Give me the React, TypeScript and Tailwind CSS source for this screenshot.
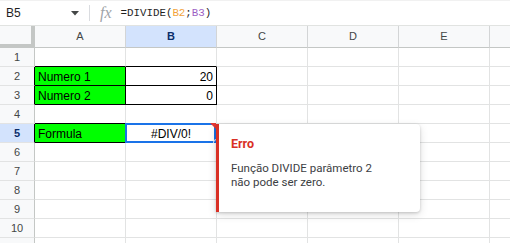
import React from 'react';

const COLS = ['A', 'B', 'C', 'D', 'E', 'F'];
const ROWS = [1, 2, 3, 4, 5, 6, 7, 8, 9, 10, 11];

type CellInfo = { text?: string; green?: boolean; rb?: boolean; bb?: boolean; align?: 'left' | 'right' | 'center' };

const DATA: Record<string, CellInfo> = {
  A1: { bb: true },
  B1: { bb: true },
  A2: { text: 'Numero 1', green: true, rb: true, bb: true },
  B2: { text: '20', rb: true, bb: true, align: 'right' },
  A3: { text: 'Numero 2', green: true, rb: true, bb: true },
  B3: { text: '0', rb: true, bb: true, align: 'right' },
  A4: { bb: true },
  A5: { text: 'Formula', green: true, rb: true, bb: true },
  B5: { text: '#DIV/0!', align: 'center' },
};

function Cell({ col, row }: { col: string; row: number }) {
  const id = `${col}${row}`;
  const info = DATA[id] || {};
  const w = col === 'F' ? 'w-[21px]' : 'w-[91px]';
  const bg = info.green ? 'bg-[#00ff00]' : 'bg-white';
  const rb = info.rb ? 'border-r-black' : 'border-r-[#e2e3e3]';
  const bb = info.bb ? 'border-b-black' : 'border-b-[#e2e3e3]';
  const align =
    info.align === 'right' ? 'justify-end pr-[3px]' : info.align === 'center' ? 'justify-center' : 'justify-start pl-[3px]';
  return (
    <div className={`relative shrink-0 h-full flex items-center border-r border-b ${w} ${bg} ${rb} ${bb} ${align}`}>
      {info.text && <span className="text-[12px] leading-none text-black whitespace-nowrap pt-[1px]">{info.text}</span>}
      {id === 'B5' && (
        <>
          <div className="absolute -left-px -top-px right-0 -bottom-px border-2 border-[#1a73e8] pointer-events-none" />
          <svg className="absolute right-0 -top-px" width="6" height="6" viewBox="0 0 6 6">
            <polygon points="0,0 6,0 6,6" fill="#e53935" />
          </svg>
          <div className="absolute -right-[4px] -bottom-[4px] w-[7px] h-[7px] rounded-full bg-[#1a73e8] border border-white" />
        </>
      )}
    </div>
  );
}

export default function App() {
  return (
    <div
      className="relative w-[510px] h-[243px] overflow-hidden bg-white"
      style={{ fontFamily: '"Liberation Sans", Arial, sans-serif' }}
    >
      {/* formula bar */}
      <div className="h-[26px] flex items-center border-t border-t-[#f1f1f1] border-b border-b-[#e1e3e1] bg-white">
        <div className="w-[89px] flex items-center pl-[6px] pr-[10px] justify-between">
          <span className="text-[12px] text-[#1f1f1f]">B5</span>
          <svg width="8" height="5" viewBox="0 0 8 5">
            <polygon points="0,0 8,0 4,4.5" fill="#444746" />
          </svg>
        </div>
        <div className="w-px h-[16px] bg-[#dadce0]" />
        <span
          className="ml-[10px] text-[16px] italic text-[#a0a4a8] leading-none"
          style={{ fontFamily: '"Liberation Serif", serif' }}
        >
          fx
        </span>
        <span
          className="ml-[9px] text-[10.8px] text-[#1f1f1f] whitespace-nowrap"
          style={{ fontFamily: '"Liberation Mono", monospace' }}
        >
          =DIVIDE(<span className="text-[#f2a33a]">B2</span>;<span className="text-[#9c5ec4]">B3</span>)
        </span>
      </div>

      {/* column headers */}
      <div className="h-[22px] flex bg-[#f8f9fa]">
        <div className="w-[35px] shrink-0 h-full border-r-[4px] border-b-[4px] border-[#c4c7c5] bg-[#f8f9fa]" />
        {COLS.map((c) => (
          <div
            key={c}
            className={`shrink-0 h-full flex items-center justify-center border-r border-r-[#d3d5d6] border-b border-b-[#c4c7c5] text-[11px] ${
              c === 'F' ? 'w-[21px]' : 'w-[91px]'
            } ${c === 'B' ? 'bg-[#d3e3fd] text-[#0b2e6b] font-bold' : 'text-[#444746]'}`}
          >
            {c === 'F' ? '' : c}
          </div>
        ))}
      </div>

      {/* rows */}
      {ROWS.map((r) => (
        <div key={r} className="h-[19px] flex">
          <div
            className={`w-[35px] shrink-0 h-full flex items-center justify-center border-r border-b border-b-[#e2e3e3] text-[11px] ${
              r === 2 || r === 3 || r === 5 ? 'border-r-black' : 'border-r-[#c4c7c5]'
            } ${r === 5 ? 'bg-[#d3e3fd] text-[#0b2e6b] font-bold' : 'bg-[#f8f9fa] text-[#444746]'}`}
          >
            {r}
          </div>
          {COLS.map((c) => (
            <Cell key={c} col={c} row={r} />
          ))}
        </div>
      ))}

      {/* error tooltip */}
      <div
        className="absolute left-[216px] top-[124px] w-[204px] h-[88px] bg-white rounded-r-[4px] border-l-[3px] border-l-[#d93025] shadow-[0_1px_3px_rgba(0,0,0,0.18),0_3px_10px_rgba(0,0,0,0.12)] pl-[12px] pt-[11px]"
        style={{ fontFamily: 'Roboto, "Noto Sans", sans-serif' }}
      >
        <div className="text-[12.5px] font-bold text-[#d93025] leading-[18px]">Erro</div>
        <div className="mt-[9px] text-[11.5px] leading-[13.5px] text-[#3c4043]">
          Função DIVIDE parâmetro 2
          <br />
          não pode ser zero.
        </div>
      </div>
    </div>
  );
}
